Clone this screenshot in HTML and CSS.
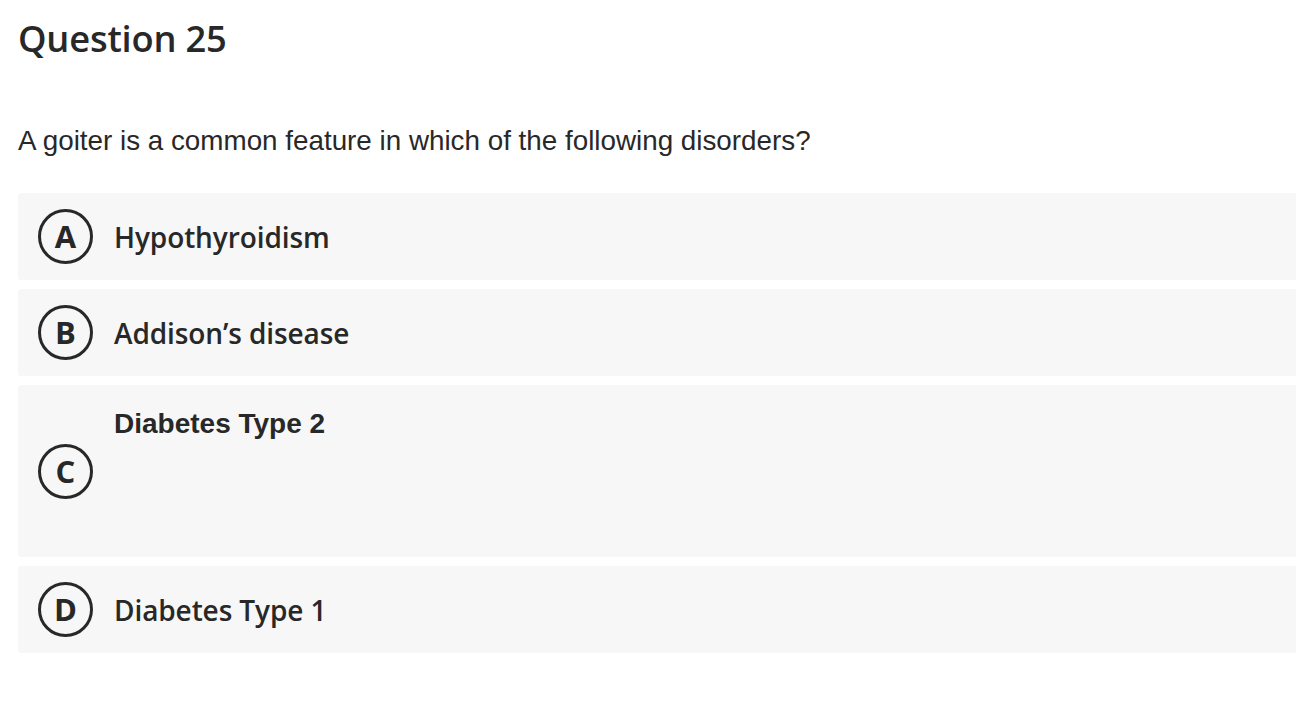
FILE: index.html
```html
<!DOCTYPE html>
<html lang="en">
<head>
<meta charset="utf-8">
<title>Question 25</title>
<link rel="stylesheet" href="styles.css">
</head>
<body>
<main class="question">
  <h1 class="q-title">Question 25</h1>
  <p class="q-text">A goiter is a common feature in which of the following disorders?</p>
  <ul class="options">
    <li class="option">
      <span class="badge">A</span>
      <span class="label">Hypothyroidism</span>
    </li>
    <li class="option">
      <span class="badge">B</span>
      <span class="label">Addison’s disease</span>
    </li>
    <li class="option option-rich">
      <span class="badge">C</span>
      <div class="rich">
        <p class="rich-text">Diabetes Type 2</p>
      </div>
    </li>
    <li class="option">
      <span class="badge">D</span>
      <span class="label">Diabetes Type 1</span>
    </li>
  </ul>
</main>
</body>
</html>
```
FILE: styles.css
```css
html, body {
  margin: 0;
  padding: 0;
  background: #ffffff;
  overflow-x: hidden;
}

body {
  color: #282828;
  font-family: "Open Sans", "Noto Sans", sans-serif;
}

.question {
  padding: 0 0 0 18px;
}

.q-title {
  margin: 0;
  padding-top: 13px;
  font-size: 36.3px;
  font-weight: 600;
  line-height: 50px;
  letter-spacing: -0.2px;
}

.q-text {
  margin: 0;
  padding-top: 63px;
  font-family: "Liberation Sans", Arial, sans-serif;
  font-size: 27.8px;
  line-height: 30px;
}

.options {
  list-style: none;
  margin: 0;
  padding: 0;
  padding-top: 37px;
  display: flex;
  flex-direction: column;
  gap: 9px;
}

.option {
  display: flex;
  align-items: center;
  gap: 21px;
  background: #f7f7f7;
  border-radius: 3px 0 0 3px;
  padding: 16px 0 16px 20px;
  height: 55px;
}

.option-rich {
  height: 140px;
}

.badge {
  flex: 0 0 auto;
  width: 55px;
  height: 55px;
  box-sizing: border-box;
  border: 3.5px solid #282828;
  border-radius: 50%;
  display: flex;
  align-items: center;
  justify-content: center;
  font-size: 31px;
  font-weight: 700;
  line-height: 1;
}

.label {
  font-size: 28px;
  font-weight: 600;
  line-height: 38px;
  letter-spacing: -0.1px;
}

.rich {
  align-self: flex-start;
  padding-top: 7px;
}

.rich-text {
  margin: 0;
  font-family: "Liberation Sans", Arial, sans-serif;
  font-size: 28px;
  font-weight: 700;
  line-height: 32px;
}
```
